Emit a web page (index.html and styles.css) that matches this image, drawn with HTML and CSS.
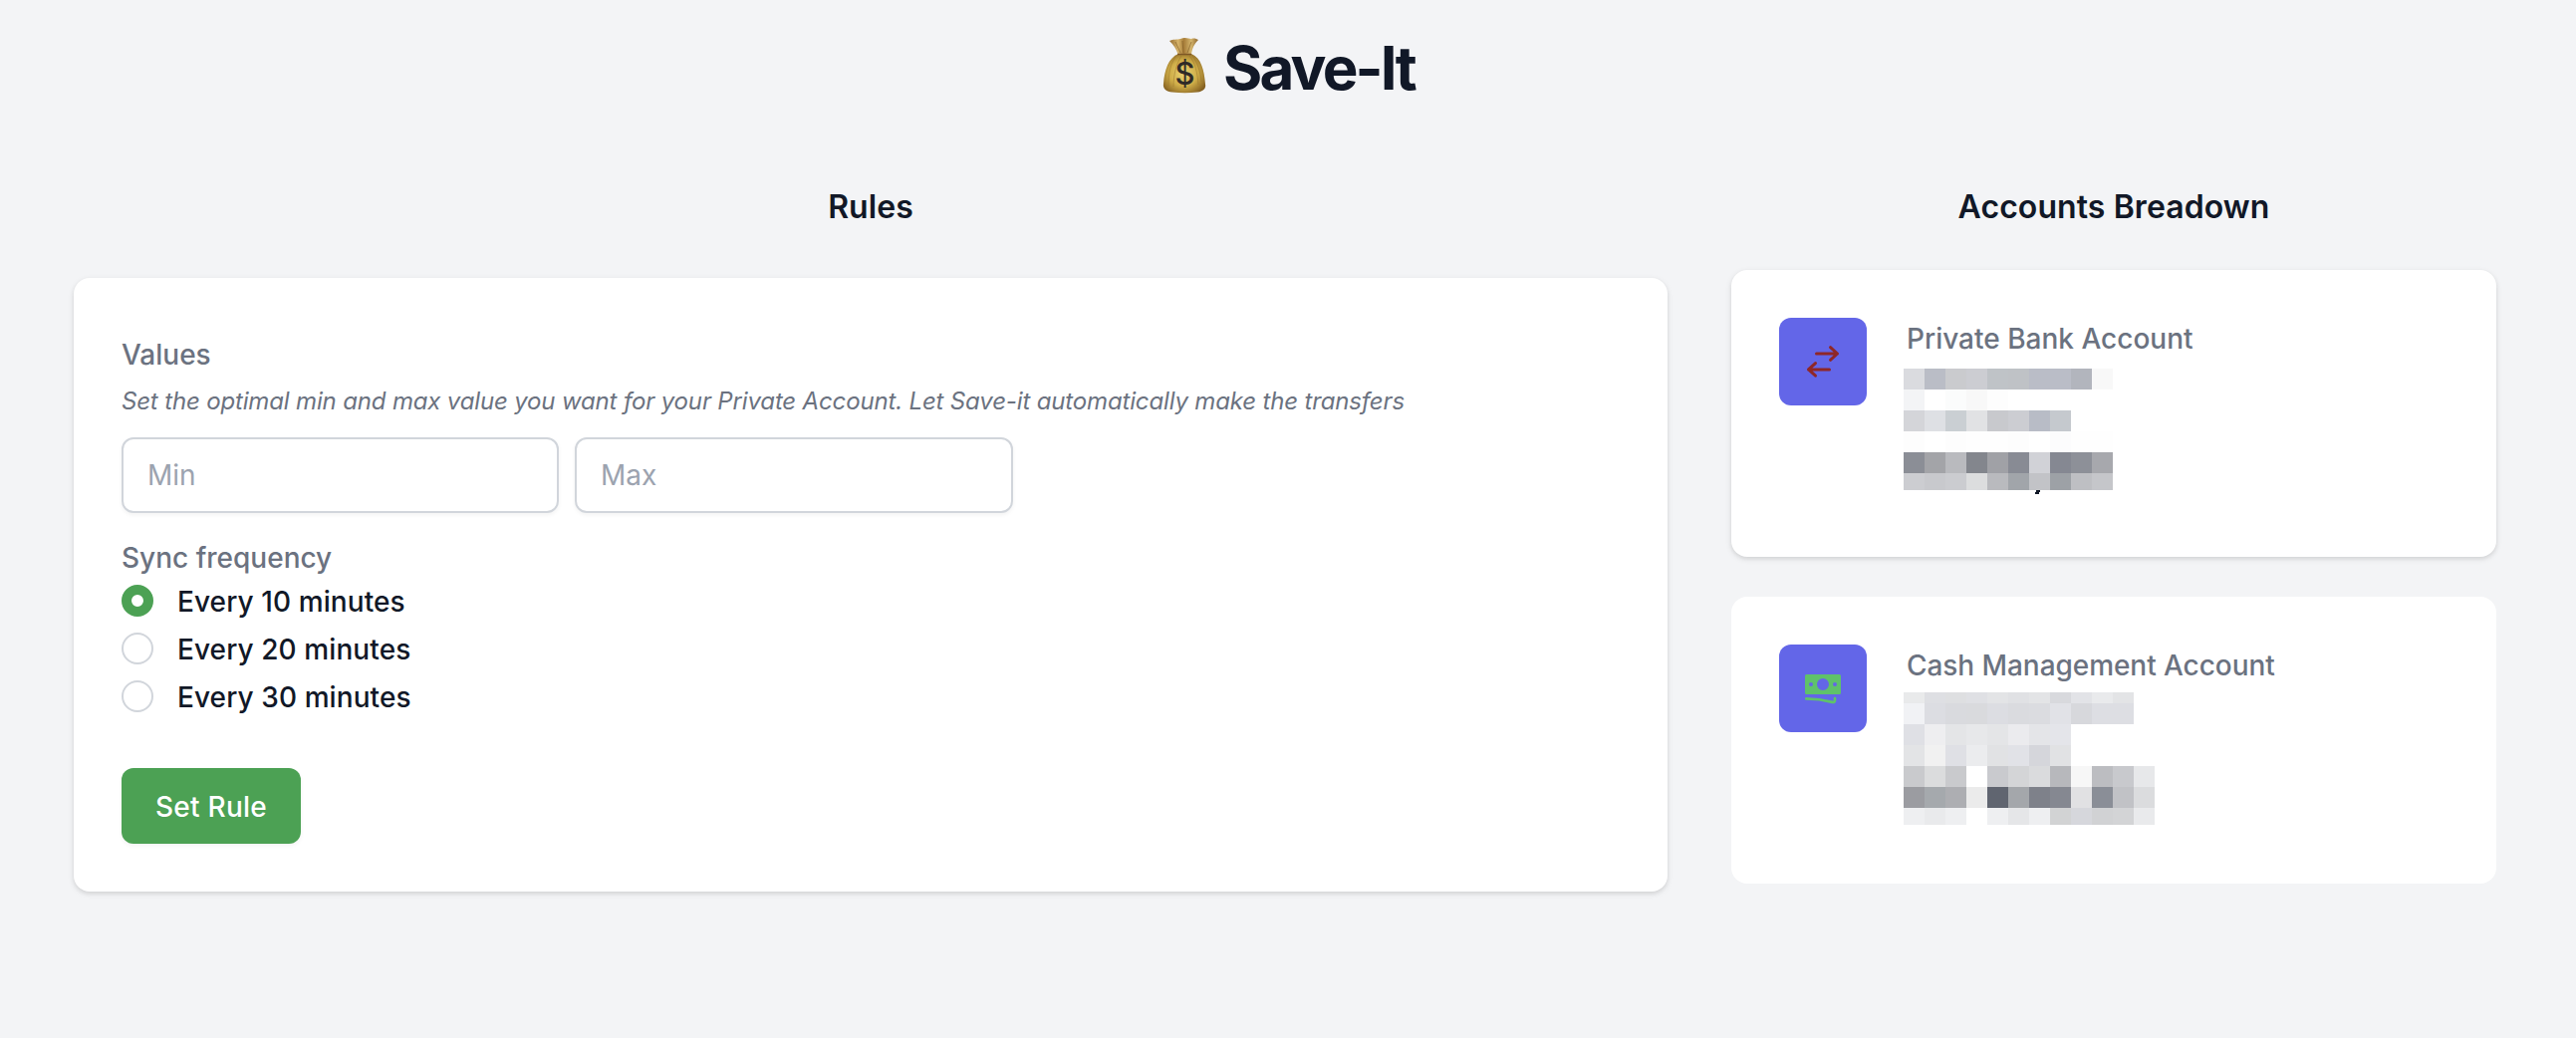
FILE: index.html
```html
<!DOCTYPE html>
<html lang="en">
<head>
<meta charset="utf-8">
<title>Save-It</title>
<link rel="stylesheet" href="styles.css">
</head>
<body>
<header class="header">
  <svg class="bag" viewBox="0 0 44 56" aria-hidden="true">
    <defs>
      <radialGradient id="sack" cx=".48" cy=".5" r=".6"><stop offset="0" stop-color="#ead373"/><stop offset=".55" stop-color="#cfad48"/><stop offset="1" stop-color="#846021"/></radialGradient>
      <linearGradient id="neck"><stop offset="0" stop-color="#936b32"/><stop offset=".3" stop-color="#d7b46a"/><stop offset=".5" stop-color="#a77d39"/><stop offset=".75" stop-color="#d5b66e"/><stop offset="1" stop-color="#8d642c"/></linearGradient>
    </defs>
    <path d="M16 16C6 20 2 32 1 46c-1 5 3 8 9 8.500 8 1 17 1 25 0 6-.5 9-4 8-8C42 33 39 20 29 16Z" fill="url(#sack)"/>
    <path d="M15 17C8 24 6 36 6 49M19 18c-5 8-8 19-8 31M27 18c6 7 8 17 9 29M30 18c5 7 8 15 9 26" fill="none" stroke="#95722c" stroke-width=".8" opacity=".6"/>
    <path d="M7 3C11 1 14 2 18 1c5-2 8 0 11 0 3-1 5 0 7 1-4 4-6 8-7 14.500H15.500C14 11 11 7 7 3Z" fill="url(#neck)"/>
    <path d="M15 16.500h14" stroke="#7d5725" stroke-width="1.500"/>
    <path d="M13 4l5 11M20 3l1 12M29 4l-4 11" stroke="#795522" stroke-width=".8" opacity=".7"/>
    <text x="22.500" y="47" text-anchor="middle" class="bag-sign">$</text>
  </svg>
  <h1 class="title">Save-It</h1>
</header>
<main class="columns">
  <section class="rules">
    <h2 class="heading">Rules</h2>
    <form class="card rules-card">
      <h3 class="label">Values</h3>
      <p class="hint">Set the optimal min and max value you want for your Private Account. Let Save-it automatically make the transfers</p>
      <div class="inputs">
        <input class="input" type="text" placeholder="Min" aria-label="Min">
        <input class="input" type="text" placeholder="Max" aria-label="Max">
      </div>
      <h3 class="label">Sync frequency</h3>
      <div class="options">
        <label class="option"><input class="radio" type="radio" name="sync" checked><span>Every 10 minutes</span></label>
        <label class="option"><input class="radio" type="radio" name="sync"><span>Every 20 minutes</span></label>
        <label class="option"><input class="radio" type="radio" name="sync"><span>Every 30 minutes</span></label>
      </div>
      <button class="button" type="button">Set Rule</button>
    </form>
  </section>
  <section class="accounts">
    <h2 class="heading">Accounts Breadown</h2>
    <article class="card account">
      <div class="tile">
        <svg class="icon" viewBox="0 0 40 40" fill="none" stroke="#8f2727" stroke-width="3" stroke-linecap="round" stroke-linejoin="round"><path d="M13.500 12h21M27.500 5.700 34.500 12l-7 6.300M26.500 27.900h-21M12.500 21.600l-7 6.300 7 6.300"/></svg>
      </div>
      <div class="details">
        <h3 class="name">Private Bank Account</h3>
        <svg class="mosaic mosaic-private" viewBox="0 0 252 127" data-mosaic="private"></svg>
      </div>
    </article>
    <article class="card account account-flat">
      <div class="tile">
        <svg class="icon" viewBox="0 0 40 40"><path fill="#5fc26a" fill-rule="evenodd" d="M3.500 6h33A1.500 1.500 0 0 1 38 7.500v17a1.500 1.500 0 0 1-1.500 1.500h-33A1.500 1.500 0 0 1 2 24.500v-17A1.500 1.500 0 0 1 3.500 6ZM20 10a6 6 0 1 0 0 12 6 6 0 0 0 0-12ZM8 14a2 2 0 1 0 0 4 2 2 0 0 0 0-4Zm24 0a2 2 0 1 0 0 4 2 2 0 0 0 0-4Z"/><path d="M3.300 30.400c9.300 0 17.500 1.200 26.200 3.500 1.500.4 2.500-.5 2.500-1.800v-2" fill="none" stroke="#5fc26a" stroke-width="2.700" stroke-linecap="round" stroke-linejoin="round"/></svg>
      </div>
      <div class="details">
        <h3 class="name name-cash">Cash Management Account</h3>
        <svg class="mosaic mosaic-cash" viewBox="0 0 252 133" data-mosaic="cash"></svg>
      </div>
    </article>
  </section>
</main>
<script src="script.js"></script>
</body>
</html>
```
FILE: styles.css
```css
* { box-sizing: border-box; margin: 0; padding: 0; }
body { min-height: 1042px; background: #f3f4f6; color: #111827; font-family: Inter, "Liberation Sans", sans-serif; font-size: 28px; line-height: 40px; font-weight: 500; }
svg { display: block; }
.header { display: flex; justify-content: center; height: 135px; padding: 31px 0 0 1px; gap: 17px; }
.bag { width: 44px; height: 56px; margin-top: 7px; }
.bag-sign { font: 500 31px Inter, sans-serif; fill: #302a27; }
.title { font-size: 60px; line-height: 72px; font-weight: 700; letter-spacing: -2.8px; padding-top: 1px; }
.columns { display: grid; grid-template-columns: 1600px 768px; column-gap: 64px; padding: 0 80px 0 74px; }
.heading { text-align: center; font-size: 32px; line-height: 48px; font-weight: 600; letter-spacing: .08px; margin-top: 49px; }
.card { background: #fff; border-radius: 16px; box-shadow: 0 2px 6px rgba(0,0,0,.1), 0 2px 4px rgba(0,0,0,.06); }
.rules-card { height: 616px; margin-top: 47px; padding: 57px 48px 48px; }
.label { color: #6b7280; font-size: 28px; font-weight: 500; }
.hint { color: #6b7280; font-size: 24px; line-height: 36px; font-style: italic; font-weight: 400; letter-spacing: -.16px; margin-top: 8px; padding-top: 1px; white-space: nowrap; }
.inputs { display: grid; grid-template-columns: 439px 440px; gap: 16px; margin: 18px 0 25px; }
.input { height: 76px; padding: 0 24px; border: 2px solid #d1d5db; border-radius: 12px; background: #fff; box-shadow: 0 2px 4px rgba(0,0,0,.05); font: 400 28px/40px Inter, sans-serif; outline: 0; }
.input::placeholder { color: #9ca3af; opacity: 1; }
.option { display: flex; align-items: center; height: 48px; gap: 24px; letter-spacing: .09px; }
.radio { appearance: none; width: 32px; height: 32px; margin-top: -2px; border: 2px solid #d1d5db; border-radius: 50%; background: #fff; }
.radio:checked { border: 10px solid #4ca154; }
.button { display: block; width: 180px; height: 76px; margin-top: 47px; padding-top: 2px; border: 0; border-radius: 12px; background: #4ca154; box-shadow: 0 2px 4px rgba(0,0,0,.05); color: #fff; font: 500 28px/40px Inter, sans-serif; letter-spacing: .25px; }
.accounts .account { display: flex; height: 288px; margin-top: 40px; padding: 48px; gap: 37px; }
.accounts .heading + .account { margin-top: 39px; }
.accounts .account-flat { box-shadow: none; }
.tile { display: grid; place-items: center; width: 88px; height: 88px; border-radius: 12px; background: #6366e8; }
.icon { width: 40px; height: 40px; }
.name { color: #6b7280; font-size: 28px; font-weight: 500; padding: 1px 0 0 3px; white-space: nowrap; }
.name-cash { letter-spacing: -.06px; }
.mosaic { width: 252px; shape-rendering: crispEdges; }
.mosaic-private { height: 127px; margin-top: 10px; }
.mosaic-cash { height: 133px; margin-top: 7px; }
```
FILE: script.js
```js
// Pixelated account details: each row is [height, cell colours].
const mosaics = {
  private: [
    [21, "dadbdf babdc6 cacbce cccdd2 bfc3c7 bfc2c6 babdc7 babdc7 b2b5bd f8f8f8"],
    [21, "f3f4f6 ffffff fbfcfc f8f8f8 fdfdfd"],
    [21, "d4d5d9 dee0e4 cacfd3 e1e2e4 c8c9cd cccdd2 b8bcc6 c5c9ce"],
    [21, "fdfdfd ffffff fdfdfd fefefe fefefe fdfdfd ffffff fcfcfd fefefe fefefe"],
    [21, "8b8e96 a3a4a8 b9babe 83868d a0a1a6 888b94 d1d2d7 858892 8d9098 a7a8ad"],
    [17, "cccdd1 c8c9cd cbccd0 dcddde b9babe a1a5aa c2c3c7 9da1a6 bebfc3 c5c6ca"]
  ],
  cash: [
    [11, "e9eaeb dedfe3 dedfe1 dfe0e4 e3e4e6 e0e1e4 e3e4e6 d8d9dd e2e3e7 e9eaec e3e4e6"],
    [21, "f1f2f5 dcdde2 d9dade d9dadd dcdde2 dadbdf dbdce0 e1e2e7 d7d8dc dddee3 dddee3"],
    [21, "dfe0e5 eeeef0 e4e5e7 e7e8ea e4e5e7 ebebee e4e5e8 e4e5ea"],
    [21, "e3e4e6 f1f1f1 dfe0e5 ebecee e1e2e4 e1e2e7 d5d6db e1e2e4"],
    [21, "c9cacd dbdcdd c9cacd ffffff c9cace d4d5d7 dadbdd b7b8bc f7f7f7 bcbdc1 c8c9cd e7e8ea"],
    [21, "9b9ca1 a5a9ad adaeb2 ebebeb 606570 a4a7ab 7e818a 858891 e1e1e3 8a8e97 c1c2c6 dbdcde"],
    [17, "eeeff1 e9eaec eeeff1 ffffff eeeff1 e5e6e8 eeeff1 d2d3d4 d6d7dc d1d2d4 d3d4d6 e9eaec"]
  ]
};
const addShape = (svg, tag, attrs) => {
  const el = document.createElementNS("http://www.w3.org/2000/svg", tag);
  for (const key in attrs) el.setAttribute(key, attrs[key]);
  svg.append(el);
};
document.querySelectorAll("[data-mosaic]").forEach(svg => {
  let y = 0;
  for (const [height, colours] of mosaics[svg.dataset.mosaic]) {
    colours.split(" ").forEach((c, i) => addShape(svg, "rect", { x: i * 21, y, width: 21, height, fill: "#" + c }));
    y += height;
  }
  if (svg.dataset.mosaic === "private") addShape(svg, "path", { d: "M133 122h4l-1 4h-4z", fill: "#111827" });
});
```
